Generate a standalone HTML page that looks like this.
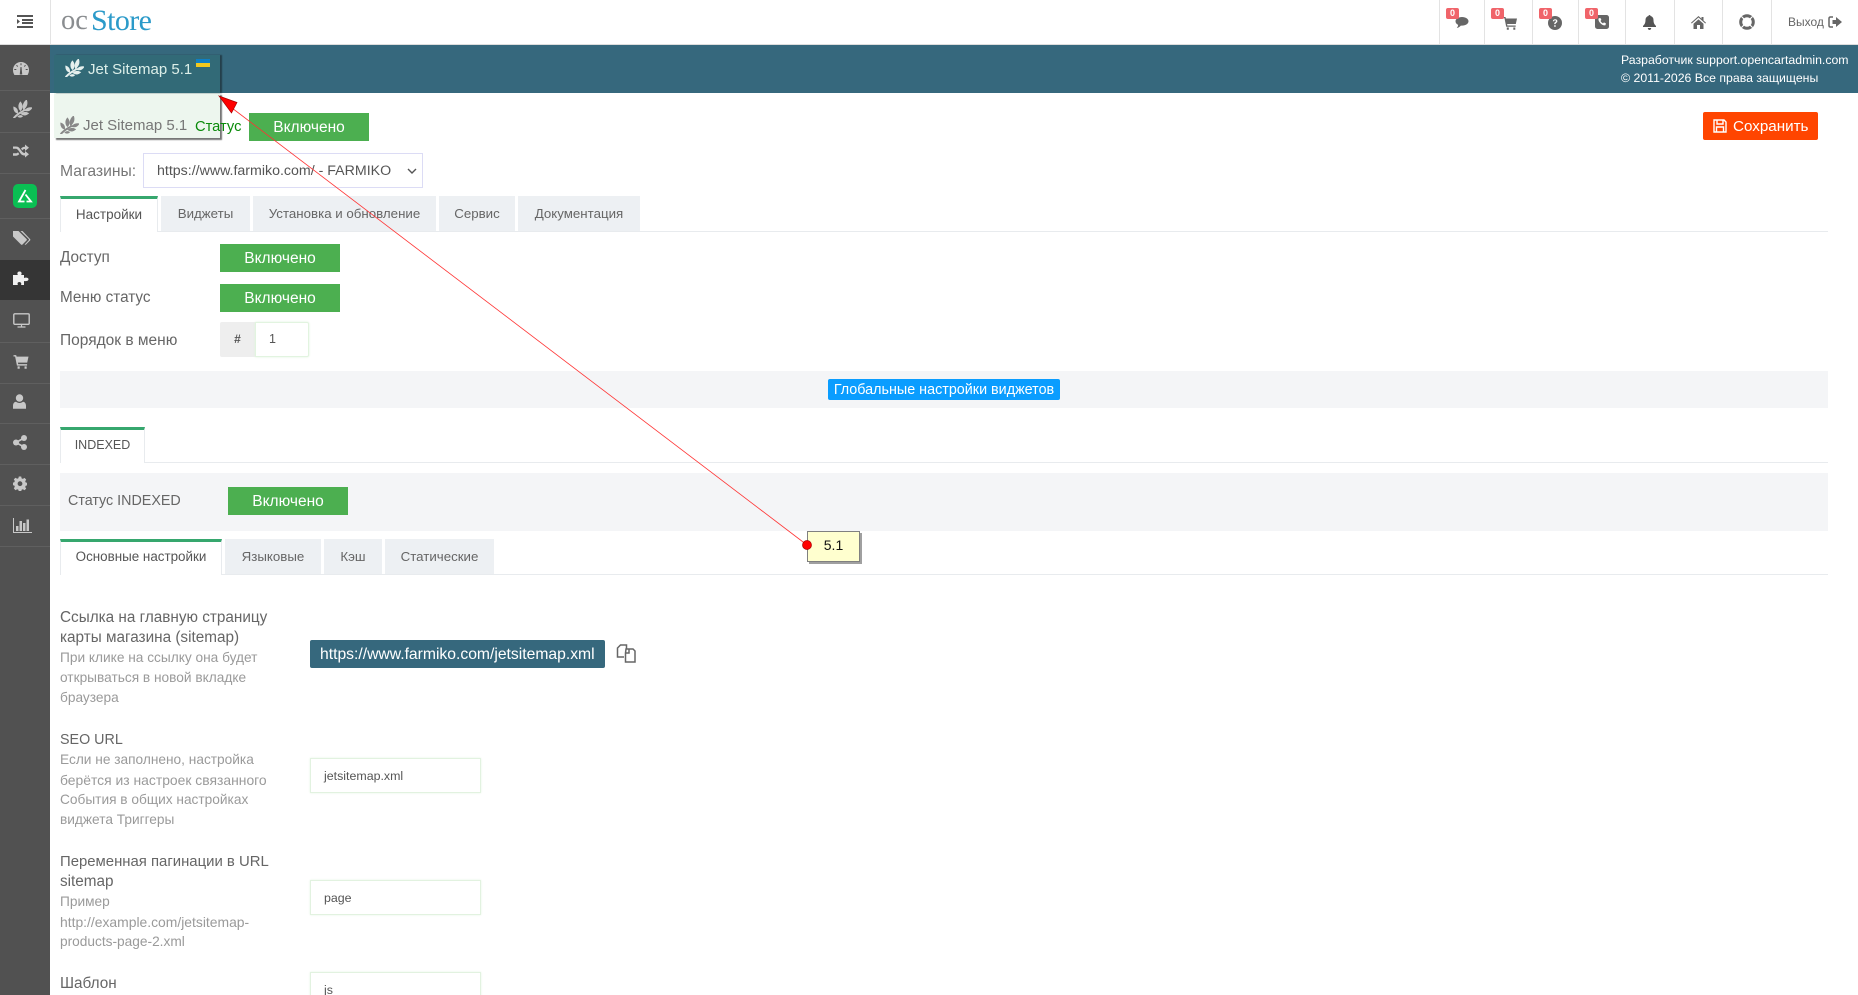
<!DOCTYPE html>
<html lang="ru"><head><meta charset="utf-8"><title>Jet Sitemap</title>
<style>
html,body{margin:0;padding:0;width:1858px;height:995px;overflow:hidden;background:#fff}
body{position:relative;font-family:"Liberation Sans",sans-serif;font-size:14px;color:#666}
.a,.t{position:absolute;white-space:nowrap}
.t{line-height:20px;height:20px}
.b{position:absolute;background:#4caf50;color:#fff;width:120px;height:28px;line-height:30px;text-align:center;font-size:15.5px}
.tab{position:absolute;background:#edf0f3;color:#666;font-size:13.3px;text-align:center;height:35px;line-height:36px;top:196px}
.tab.on{background:#fff;border:1px solid #e8ebee;border-top:3px solid #36a76e;border-bottom:0;box-sizing:border-box;color:#555}
.l{color:#666;font-size:15.3px;margin-top:1px}
.g{color:#9a9a9a;font-size:13.7px;margin-top:1px}
.in{position:absolute;box-sizing:border-box;background:#fff;border:1px solid #e2f2e0;box-shadow:0 0 2px #e4f4e2;left:310px;width:171px;height:35px;line-height:35px;padding-left:13px;font-size:12.4px;color:#555}
.sep{position:absolute;left:0;width:50px;height:1px;background:#5f5f5f}
svg{position:absolute;display:block}
.bd{position:absolute;top:8px;width:13px;height:11px;background:#f0646a;color:#fff;font:bold 9px/11px "Liberation Sans",sans-serif;text-align:center;border-radius:2px}
.vs{position:absolute;top:0;width:1px;height:44px;background:#e3e3e3}
</style></head><body>

<!-- header -->
<div class="a" style="left:0;top:44px;width:1858px;height:1px;background:#ddd"></div>
<div class="vs" style="left:50px"></div>
<svg style="left:17px;top:15px" width="16" height="13" viewBox="0 0 16 13" fill="#555"><path d="M0 0h16v2H0zM5 4h11v2H5zM5 7h11v2H5zM0 11h16v2H0zM0 4l3 2.500L0 9z"/></svg>
<div class="a" style="left:61px;top:5px;font:28.500px/32px 'Liberation Serif',serif;color:#8a8d90">oc</div>
<div class="a" style="left:91px;top:3px;font:30px/36px 'Liberation Serif',serif;letter-spacing:-.6px;color:#2b9ac9">Store</div>

<div class="vs" style="left:1439px"></div><div class="vs" style="left:1484px"></div><div class="vs" style="left:1532px"></div><div class="vs" style="left:1578px"></div><div class="vs" style="left:1625px"></div><div class="vs" style="left:1674px"></div><div class="vs" style="left:1722px"></div><div class="vs" style="left:1771px"></div>

<svg style="left:1455px;top:16px" width="14" height="13" viewBox="0 0 14 13" fill="#666"><path d="M7 1c3.600 0 6.500 1.800 6.500 4.300S10.600 9.600 7 9.600H5.800C4.800 10.800 3.400 11.700 1.800 12c.8-.8 1.300-2 1.300-3.100C1.500 8.100.5 6.800.5 5.300.5 2.800 3.400 1 7 1z"/></svg>
<div class="bd" style="left:1446px">0</div>
<svg style="left:1503px;top:16px" width="14" height="14" viewBox="0 0 14 14" fill="#666"><path d="M0 1h2.500l.4 1.500H14l-1.200 5.500H4.100l.3 1.500h8.300v1.300H3.200L1.500 2.300H0zM3.800 11.500h2v2.300h-2zM10.300 11.500h2v2.300h-2z"/></svg>
<div class="bd" style="left:1491px">0</div>
<svg style="left:1548px;top:16px" width="14" height="14" viewBox="0 0 14 14"><circle cx="7" cy="7" r="7" fill="#666"/><path d="M4.800 5.200C5 3.800 6 3.200 7.200 3.200c1.300 0 2.200.8 2.200 1.900 0 1.700-1.800 1.600-1.800 3H6.200c0-2.200 1.700-2 1.700-3 0-.5-.3-.8-.8-.8-.6 0-.9.400-1 1zM6.200 9.200h1.500v1.600H6.200z" fill="#fff"/></svg>
<div class="bd" style="left:1539px">0</div>
<svg style="left:1595px;top:15px" width="14" height="14" viewBox="0 0 14 14"><rect width="14" height="14" rx="2.500" fill="#666"/><path d="M3.500 3.500l1.800-.6 1.100 2-.9 1c.5 1 1.400 2 2.500 2.500l1-1 2 1.100-.6 1.800c-3 .8-7.600-3.600-6.900-6.800z" fill="#fff"/></svg>
<div class="bd" style="left:1585px">0</div>
<svg style="left:1642px;top:15px" width="15" height="15" viewBox="0 0 15 15" fill="#555"><path d="M7.500 0c.7 0 1 .4 1 1 2 .5 3 2 3 4 0 3 1 4.500 2.500 6v1H1v-1c1.500-1.500 2.500-3 2.500-6 0-2 1-3.500 3-4 0-.6.300-1 1-1zM5.800 13h3.400c0 1-.7 2-1.700 2s-1.700-1-1.700-2z"/></svg>
<svg style="left:1691px;top:16px" width="15" height="13" viewBox="0 0 15 13" fill="#666"><path d="M7.500 0l3 2.700V1h2v3.500L15 6.800l-.7.700-6.800-6-6.800 6L0 6.800zM2.500 7.800l5-4.400 5 4.400V13H9V9H6v4H2.500z"/></svg>
<svg style="left:1739px;top:14px" width="16" height="16" viewBox="0 0 16 16" fill="none" stroke="#666"><circle cx="8" cy="8" r="6.300" stroke-width="3"/><path d="M2.500 2.500l3 3M13.500 2.500l-3 3M2.500 13.500l3-3M13.500 13.500l-3-3" stroke="#fff" stroke-width="1.200"/></svg>
<div class="a" style="left:1788px;top:14px;font-size:12px;line-height:16px;color:#666">Выход</div>
<svg style="left:1828px;top:16px" width="14" height="12" viewBox="0 0 14 12" fill="#666"><path d="M5 1H2.500C1.500 1 1 1.600 1 2.500v7c0 .9.500 1.500 1.500 1.500H5" fill="none" stroke="#666" stroke-width="1.500"/><path d="M4.500 4H8V1l6 5-6 5V8H4.500z"/></svg>

<!-- sidebar -->
<div class="a" style="left:0;top:45px;width:50px;height:950px;background:#515151"></div>
<div class="a" style="left:0;top:260px;width:50px;height:40px;background:#353535"></div>
<div class="sep" style="top:90px"></div><div class="sep" style="top:132px"></div><div class="sep" style="top:173px"></div><div class="sep" style="top:218px"></div><div class="sep" style="top:342px"></div><div class="sep" style="top:383px"></div><div class="sep" style="top:423px"></div><div class="sep" style="top:464px"></div><div class="sep" style="top:505px"></div><div class="sep" style="top:546px"></div>

<svg style="left:13px;top:62px" width="16" height="13" viewBox="0 0 16 13"><path d="M8 0C3.500 0 0 3.600 0 8c0 1.800.5 3.400 1.400 5h13.200c.9-1.600 1.400-3.200 1.400-5 0-4.400-3.500-8-8-8z" fill="#c8c8c8"/><path d="M7.300 12l.7-7 .7 7zM8 1.300v2M3.500 3.200l1.200 1.400M12.500 3.200l-1.200 1.400M1.300 7.500h2M12.700 7.500h2" stroke="#515151" stroke-width="1" fill="#515151"/></svg>
<svg style="left:13px;top:100px" width="19" height="18" viewBox="0 0 19 18" fill="#c4c4c4" stroke="#c4c4c4" stroke-width=".8"><g id="leaf"><path d="M.5 17.500C4 13.500 7.500 11.500 12 9.500l.4.6C8 12.500 5 14.500 1.500 18z"/><path d="M7.500 10.500C5 8 5.500 4 7.500 2c2 2.500 2.500 6 0 8.500zM10.500 9.500C9.500 6 10.500 2.500 13.500 0c1.200 3.500.2 7-3 9.500zM4.500 13C2 12.500.5 10 .8 7c2.700 1 4.200 3.200 3.700 6zM12 10.500c1.500-2.200 4-3.300 7-2.700-1.500 2.500-4 3.700-7 2.700zM8 13.800c2-1.800 5-2 7.500-.5-2.200 2-5 2.200-7.500.5zM5 16.500c1.200-1 3-1.200 4.500-.3-1.300 1.200-3 1.300-4.500.3z"/></g></svg>
<svg style="left:13px;top:144px" width="16" height="14" viewBox="0 0 16 14" fill="#c8c8c8"><path d="M0 2.500h3c2.500 0 3.500 1.500 4.500 3l1.500 2c.8 1 1.500 1.500 3 1.500V7l4 3.300-4 3.200v-2c-2.600 0-3.800-1-4.800-2.500l-1.400-2C4.600 5.500 4 4.700 3 4.700H0zM12 .5l4 3.300-4 3.200V5c-1.500 0-2 .5-2.700 1.400L8 4.500c1-1 2-1.800 4-1.800zM0 9.300h3c.8 0 1.400-.4 2-1.100l1.300 1.900c-.9 1-2 1.600-3.300 1.600H0z"/></svg>
<div class="a" style="left:13px;top:184px;width:24px;height:24px;border-radius:5px;background:#0abf53"></div>
<svg style="left:16px;top:187px" width="18" height="18" viewBox="0 0 18 18" fill="none" stroke="#fff" stroke-width="1.800"><path d="M9.500 3L3 14.500H8.500M9.500 7.500l5.500 7H10.500"/></svg>
<svg style="left:13px;top:230px" width="18" height="16" viewBox="0 0 18 16" fill="#c8c8c8"><path d="M0 1h5.500l8 8c.5.500.5 1 0 1.500l-4 4c-.5.500-1 .500-1.500 0l-8-8z"/><path d="M7.500 1h2l7.500 8c.5.500.5 1 0 1.500l-4 4c-.5.400-1 .400-1.300 0l4-4.200c.4-.4.400-.9 0-1.300z"/></svg>
<svg style="left:13px;top:271px" width="16" height="15" viewBox="0 0 16 15" fill="#f0f0f0"><path d="M0 4h5c-1-.8-1-3.500 1.500-3.500S9 3.200 8 4h3v3c1-.6 4.500-.9 4.500 1.300S12 10.300 11 10v4H8c.6-1 .3-3-1.700-3S4.300 13 5 14H0z"/></svg>
<svg style="left:13px;top:313px" width="17" height="15" viewBox="0 0 17 15" fill="none" stroke="#c8c8c8"><rect x=".8" y=".8" width="15.400" height="10.500" rx="1" stroke-width="1.400"/><path d="M8.500 11.500v2M4.500 14h8" stroke-width="1.200"/></svg>
<svg style="left:13px;top:354px" width="16" height="15" viewBox="0 0 14 14" fill="#c8c8c8"><path d="M0 1h2.500l.4 1.500H14l-1.200 5.500H4.100l.3 1.500h8.300v1.300H3.200L1.500 2.300H0zM3.800 11.500h2v2.300h-2zM10.300 11.500h2v2.300h-2z"/></svg>
<svg style="left:13px;top:394px" width="13" height="15" viewBox="0 0 13 15" fill="#c8c8c8"><circle cx="6.500" cy="4" r="3.700"/><path d="M0 15v-3c0-2.500 1.500-4 3-4 1 .8 2.200 1.200 3.500 1.200S9 8.800 10 8c1.500 0 3 1.500 3 4v3z" transform="translate(0 -.2)"/></svg>
<svg style="left:13px;top:435px" width="14" height="15" viewBox="0 0 14 15" fill="#c8c8c8"><circle cx="11" cy="3" r="3"/><circle cx="3" cy="7.500" r="3"/><circle cx="11" cy="12" r="3"/><path d="M3 7.500L11 3M3 7.500l8 4.500" stroke="#c8c8c8" stroke-width="1.600"/></svg>
<svg style="left:13px;top:476px" width="14" height="15" viewBox="0 0 14 14" fill="#c8c8c8"><path fill-rule="evenodd" d="M5.800 0h2.400l.4 1.900 1.300.5 1.600-1 1.700 1.700-1 1.600.5 1.300 1.900.4v2.400l-1.900.4-.5 1.300 1 1.600-1.700 1.700-1.600-1-1.300.5-.4 1.900H5.800l-.4-1.900-1.300-.5-1.600 1L.8 11.900l1-1.600-.5-1.300L-.6 8.600V6.200l1.900-.4.5-1.300-1-1.600L2.500 1.200l1.600 1 1.300-.5zM7 4.800a2.400 2.400 0 100 4.800 2.400 2.400 0 000-4.800z"/></svg>
<svg style="left:13px;top:518px" width="19" height="15" viewBox="0 0 19 15" fill="#c8c8c8"><path d="M0 0h1v14h18v1H0z"/><path d="M3 8h2.500v5H3zM6.500 3h2.500v10H6.500zM10 5h2.500v8H10zM13.500 1.500h2.500V13h-2.500z"/></svg>

<!-- teal bar -->
<div class="a" style="left:50px;top:45px;width:1808px;height:48px;background:#36687d"></div>
<div class="a" style="left:1621px;top:51px;font-size:12.300px;line-height:18px;color:#fff">Разработчик support.opencartadmin.com<br>© 2011-2026 Все права защищены</div>

<!-- popup -->
<div class="a" style="left:54px;top:93px;width:166px;height:45px;background:#edf6ee;box-shadow:2px 2px 1px #777"></div>
<div class="a" style="left:54px;top:55px;width:166px;height:38px;background:#326a77;box-shadow:2px 0 1px #243f4b"></div>
<svg style="left:65px;top:59px" width="19" height="18" viewBox="0 0 19 18" fill="#e6f0ee" stroke="#e6f0ee" stroke-width=".8"><use href="#leaf"/></svg>
<div class="t" style="left:88px;top:59.500px;font-size:15px;color:#dcefe9">Jet Sitemap 5.1</div>
<div class="a" style="left:196px;top:59px;width:14px;height:4px;background:#0f7fc4"></div>
<div class="a" style="left:196px;top:63px;width:14px;height:4px;background:#f2c81e"></div>
<svg style="left:60px;top:116px" width="19" height="18" viewBox="0 0 19 18" fill="#888" stroke="#888" stroke-width=".8"><use href="#leaf"/></svg>
<div class="t" style="left:83px;top:116px;font-size:15px;color:#777">Jet Sitemap 5.1</div>
<div class="t" style="left:195px;top:116.500px;font-size:14.700px;color:#0a8a0a">Статус</div>
<div class="b" style="left:249px;top:113px">Включено</div>

<!-- save -->
<div class="a" style="left:1703px;top:112px;width:115px;height:28px;background:#ff4500;border-radius:2px"></div>
<svg style="left:1713px;top:119px" width="14" height="14" viewBox="0 0 14 14" fill="none" stroke="#fff" stroke-width="1.400"><path d="M1 1h10l2 2v10H1zM4 1v4h6V1M3.500 13V8h7v5"/></svg>
<div class="t" style="left:1733px;top:116.500px;color:#fff;font-size:15.200px">Сохранить</div>

<!-- store select -->
<div class="t" style="left:60px;top:162px;font-size:15.700px;color:#777">Магазины:</div>
<div class="a" style="left:143px;top:153px;width:278px;height:33px;border:1px solid #dcdcf5;line-height:35px;font-size:14.200px;color:#555;text-indent:13px">https://www.farmiko.com/ - FARMIKO</div>
<svg style="left:407px;top:168px" width="10" height="6" viewBox="0 0 10 6" fill="none" stroke="#555" stroke-width="1.400"><path d="M1 1l4 4 4-4"/></svg>

<!-- tabs 1 -->
<div class="a" style="left:60px;top:231px;width:1768px;height:1px;background:#e8ebee"></div>
<div class="tab on" style="left:60px;top:196px;width:98px;height:36px;line-height:31px;font-size:13.500px">Настройки</div>
<div class="tab" style="left:161px;width:89px">Виджеты</div>
<div class="tab" style="left:253px;width:183px">Установка и обновление</div>
<div class="tab" style="left:439px;width:76px">Сервис</div>
<div class="tab" style="left:518px;width:122px">Документация</div>

<div class="t l" style="left:60px;top:247px">Доступ</div>
<div class="b" style="left:220px;top:244px">Включено</div>
<div class="t l" style="left:60px;top:287px">Меню статус</div>
<div class="b" style="left:220px;top:284px">Включено</div>
<div class="t l" style="left:60px;top:330px;font-size:15.500px">Порядок в меню</div>
<div class="a" style="left:220px;top:322px;width:35px;height:35px;background:#eeeeee;border-radius:2px 0 0 2px;text-align:center;line-height:35px;font-size:12px;font-weight:bold;color:#555">#</div>
<div class="a" style="left:255px;top:322px;width:54px;height:35px;box-sizing:border-box;border:1px solid #e2f4e0;box-shadow:0 0 2px #e0f2dd;border-radius:0 2px 2px 0;background:#fff;line-height:33px;padding-left:13px;font-size:12.500px;color:#555">1</div>

<!-- global -->
<div class="a" style="left:60px;top:371px;width:1768px;height:37px;background:#f4f5f7"></div>
<div class="a" style="left:828px;top:379px;width:232px;height:21px;background:#0a9dff;border-radius:2px;color:#fff;text-align:center;line-height:22px;font-size:14.350px">Глобальные настройки виджетов</div>

<!-- indexed -->
<div class="a" style="left:60px;top:462px;width:1768px;height:1px;background:#e8ebee"></div>
<div class="tab on" style="left:60px;top:427px;width:85px;height:36px;line-height:30px;font-size:12.500px">INDEXED</div>
<div class="a" style="left:60px;top:473px;width:1768px;height:58px;background:#f4f5f7"></div>
<div class="t" style="left:68px;top:491px;font-size:14.300px;color:#666">Статус INDEXED</div>
<div class="b" style="left:228px;top:487px">Включено</div>

<!-- tabs 2 -->
<div class="a" style="left:60px;top:574px;width:1768px;height:1px;background:#e8ebee"></div>
<div class="tab on" style="left:60px;top:539px;width:162px;height:36px;line-height:30px;font-size:13.400px">Основные настройки</div>
<div class="tab" style="left:225px;top:539px;width:96px">Языковые</div>
<div class="tab" style="left:324px;top:539px;width:58px">Кэш</div>
<div class="tab" style="left:385px;top:539px;width:109px">Статические</div>

<!-- form -->
<div class="t l" style="left:60px;top:607px">Ссылка на главную страницу</div>
<div class="t l" style="left:60px;top:627px">карты магазина (sitemap)</div>
<div class="t g" style="left:60px;top:647px">При клике на ссылку она будет</div>
<div class="t g" style="left:60px;top:667px">открываться в новой вкладке</div>
<div class="t g" style="left:60px;top:687px">браузера</div>
<div class="a" style="left:310px;top:640px;width:295px;height:28px;background:#36687d;border-radius:2px;color:#fff;line-height:29px;text-indent:10px;font-size:15.700px">https://www.farmiko.com/jetsitemap.xml</div>
<svg style="left:616px;top:644px" width="23" height="19" viewBox="0 0 23 19" fill="none" stroke="#666" stroke-width="1.500"><path d="M8 13H1.500V4l3-3h6v4"/><path d="M10 5h7l2 2v11h-9.500V9z"/><path d="M13 5v4H9.500"/></svg>

<div class="t l" style="left:60px;top:729px;font-size:14.300px">SEO URL</div>
<div class="t g" style="left:60px;top:749px">Если не заполнено, настройка</div>
<div class="t g" style="left:60px;top:769px;font-size:13.900px">берётся из настроек связанного</div>
<div class="t g" style="left:60px;top:789px">События в общих настройках</div>
<div class="t g" style="left:60px;top:809px">виджета Триггеры</div>
<div class="in" style="top:758px">jetsitemap.xml</div>

<div class="t l" style="left:60px;top:851px;font-size:14.900px">Переменная пагинации в URL</div>
<div class="t l" style="left:60px;top:871px">sitemap</div>
<div class="t g" style="left:60px;top:891px">Пример</div>
<div class="t g" style="left:60px;top:911px;font-size:13.900px">http://example.com/jetsitemap-</div>
<div class="t g" style="left:60px;top:931px">products-page-2.xml</div>
<div class="in" style="top:880px">page</div>

<div class="t l" style="left:60px;top:973px">Шаблон</div>
<div class="in" style="top:972px">js</div>

<!-- annotation -->
<div class="a" style="left:807px;top:531px;width:51px;height:29px;background:#ffffcf;border:1px solid #808080;box-shadow:2px 2px 0 #a0a0a0;text-align:center;line-height:27px;font-size:14px;color:#111">5.1</div>
<svg style="left:0;top:0" width="1858" height="995" viewBox="0 0 1858 995">
<line x1="807" y1="545" x2="228" y2="105" stroke="#f33" stroke-width=".8"/>
<path d="M219 96L237 102.500 231.500 113z" fill="#f00" stroke="#a80000" stroke-width=".7"/>
<circle cx="807" cy="545" r="4.500" fill="#f00" stroke="#a80000" stroke-width=".7"/>
</svg>

</body></html>
